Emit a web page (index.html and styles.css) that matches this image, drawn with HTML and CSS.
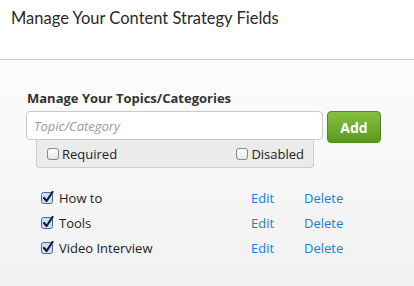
FILE: index.html
```html
<!DOCTYPE html>
<html lang="en">
<head>
    <meta charset="UTF-8">
    <meta name="viewport" content="width=device-width, initial-scale=1.0">
    <title>Content Strategy Fields</title>
    <link rel="stylesheet" href="styles.css">
</head>
<body>
    <div class="header">
        <h1>Manage Your Content Strategy Fields</h1>
    </div>
    <div class="panel">
        <h2>Manage Your Topics/Categories</h2>
        <div class="add-row">
            <input type="text" class="topic-input" placeholder="Topic/Category">
            <button class="add-btn">Add</button>
        </div>
        <div class="options">
            <label class="opt"><span class="box"></span>Required</label>
            <label class="opt"><span class="box"></span>Disabled</label>
        </div>
        <ul class="topics">
            <li>
                <span class="name"><svg class="check" width="13" height="14" viewBox="0 0 13 14"><rect x="0.5" y="1.5" width="11" height="11" rx="2" fill="#cfe0f5" stroke="#4a6a94"/><path d="M3 7 L5.6 10 L11.5 1" fill="none" stroke="#0f1f3a" stroke-width="2.2" stroke-linecap="round" stroke-linejoin="round"/></svg>How to</span>
                <a href="#" class="edit">Edit</a>
                <a href="#" class="del">Delete</a>
            </li>
            <li>
                <span class="name"><svg class="check" width="13" height="14" viewBox="0 0 13 14"><rect x="0.5" y="1.5" width="11" height="11" rx="2" fill="#cfe0f5" stroke="#4a6a94"/><path d="M3 7 L5.6 10 L11.5 1" fill="none" stroke="#0f1f3a" stroke-width="2.2" stroke-linecap="round" stroke-linejoin="round"/></svg>Tools</span>
                <a href="#" class="edit">Edit</a>
                <a href="#" class="del">Delete</a>
            </li>
            <li>
                <span class="name"><svg class="check" width="13" height="14" viewBox="0 0 13 14"><rect x="0.5" y="1.5" width="11" height="11" rx="2" fill="#cfe0f5" stroke="#4a6a94"/><path d="M3 7 L5.6 10 L11.5 1" fill="none" stroke="#0f1f3a" stroke-width="2.2" stroke-linecap="round" stroke-linejoin="round"/></svg>Video Interview</span>
                <a href="#" class="edit">Edit</a>
                <a href="#" class="del">Delete</a>
            </li>
        </ul>
    </div>
</body>
</html>
```

FILE: styles.css
```css
body {
    margin: 0;
    font-family: 'Open Sans', sans-serif;
    background-color: #f3f3f3;
    color: #333;
}
.header {
    background-color: white;
    height: 59px;
    border-bottom: 1px solid #cfcfcf;
    padding: 0 11px;
}
h1 {
    margin: 0;
    padding-top: 8px;
    font-family: 'Lato', sans-serif;
    font-weight: normal;
    font-size: 16.5px;
    color: #2a2a2a;
}
.panel {
    background: linear-gradient(#fcfcfc, #f1f1f1);
    min-height: 226px;
    padding: 30px 0 0 27px;
    box-sizing: border-box;
}
h2 {
    margin: 0 0 4px;
    font-size: 13px;
    font-weight: bold;
    color: #333;
    line-height: 17px;
}
.add-row {
    display: flex;
    gap: 4px;
    margin-left: -1px;
}
.topic-input {
    width: 297px;
    height: 29px;
    box-sizing: border-box;
    border: 1px solid #c9c9c9;
    border-radius: 4px;
    padding: 0 7px;
    font-family: 'Open Sans', sans-serif;
    font-size: 13px;
    background: white;
}
.topic-input::placeholder {
    color: #999;
    font-style: italic;
}
.add-btn {
    width: 54px;
    height: 32px;
    border: 1px solid #4f8a1a;
    border-radius: 4px;
    background: linear-gradient(#86c040, #5a9a1e);
    color: white;
    font-family: 'Open Sans', sans-serif;
    font-weight: bold;
    font-size: 14px;
    cursor: pointer;
}
.options {
    display: flex;
    justify-content: space-between;
    width: 278px;
    height: 28px;
    box-sizing: border-box;
    margin: -3px 0 0 9px;
    padding: 0 9px 0 10px;
    align-items: center;
    background-color: #ebebeb;
    border: 1px solid #cdcdcd;
    border-top: none;
    border-radius: 0 0 4px 4px;
}
.opt {
    display: flex;
    align-items: center;
    gap: 3px;
    font-size: 13px;
    color: #222;
}
.box {
    width: 10px;
    height: 10px;
    border: 1px solid #888;
    border-radius: 3px;
    background: linear-gradient(#fff, #e6e6e6);
}
.topics {
    list-style: none;
    margin: 17px 0 0;
    padding: 0 0 0 14px;
}
.topics li {
    display: flex;
    align-items: center;
    height: 25px;
    font-size: 13px;
}
.name {
    display: flex;
    align-items: center;
    gap: 5px;
    width: 210px;
    color: #222;
}
.topics a {
    color: #1a7dd6;
    text-decoration: none;
}
.edit {
    width: 53px;
}
```
